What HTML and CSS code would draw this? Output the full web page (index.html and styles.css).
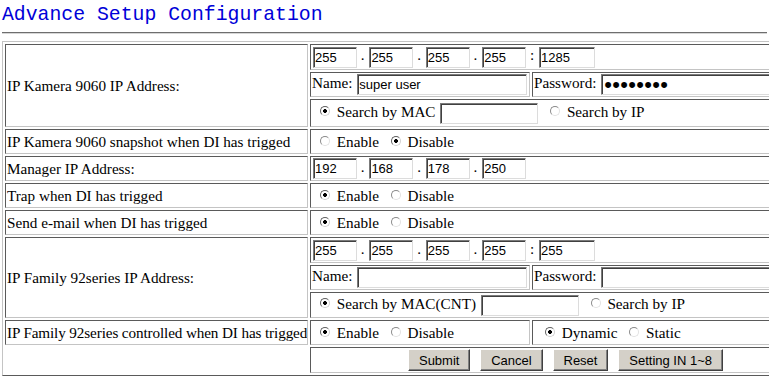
FILE: index.html
```html
<!DOCTYPE html>
<html>
<head>
    <title>Advance Setup Configuration</title>
    <link rel="stylesheet" href="styles.css">
</head>
<body>
    <div class="title">Advance Setup Configuration</div>
    <hr class="rule">

    <form id="setupForm">
    <table class="setup">
        <colgroup>
            <col class="c-label">
            <col class="c-mid">
            <col class="c-right">
        </colgroup>

        <tr class="r-ip">
            <td rowspan="3">IP Kamera 9060 IP Address:</td>
            <td colspan="2"><input type="text" class="oct" value="255"> . <input type="text" class="oct" value="255"> . <input type="text" class="oct" value="255"> . <input type="text" class="oct" value="255"> : <input type="text" class="port" value="1285"></td>
        </tr>
        <tr>
            <td>Name: <input type="text" class="name" value="super user"></td>
            <td>Password: <input type="password" class="name pass" value="12345678"></td>
        </tr>
        <tr class="r-search">
            <td colspan="2"><input type="radio" name="camSearch" checked> Search by MAC <input type="text" class="mac"> <input type="radio" name="camSearch"> Search by IP</td>
        </tr>

        <tr>
            <td>IP Kamera 9060 snapshot when DI has trigged</td>
            <td colspan="2"><input type="radio" name="snap"> Enable <input type="radio" name="snap" checked> Disable</td>
        </tr>
        <tr>
            <td>Manager IP Address:</td>
            <td colspan="2"><input type="text" class="oct" value="192"> . <input type="text" class="oct" value="168"> . <input type="text" class="oct" value="178"> . <input type="text" class="oct" value="250"></td>
        </tr>
        <tr>
            <td>Trap when DI has trigged</td>
            <td colspan="2"><input type="radio" name="trap" checked> Enable <input type="radio" name="trap"> Disable</td>
        </tr>
        <tr>
            <td>Send e-mail when DI has trigged</td>
            <td colspan="2"><input type="radio" name="mail" checked> Enable <input type="radio" name="mail"> Disable</td>
        </tr>

        <tr class="r-ip">
            <td rowspan="3">IP Family 92series IP Address:</td>
            <td colspan="2"><input type="text" class="oct" value="255"> . <input type="text" class="oct" value="255"> . <input type="text" class="oct" value="255"> . <input type="text" class="oct" value="255"> : <input type="text" class="port" value="255"></td>
        </tr>
        <tr>
            <td>Name: <input type="text" class="name"></td>
            <td>Password: <input type="password" class="name pass"></td>
        </tr>
        <tr class="r-ip">
            <td colspan="2"><input type="radio" name="famSearch" checked> Search by MAC(CNT) <input type="text" class="mac"> <input type="radio" name="famSearch"> Search by IP</td>
        </tr>

        <tr>
            <td class="tight">IP Family 92series controlled when DI has trigged</td>
            <td><input type="radio" name="famCtrl" checked> Enable <input type="radio" name="famCtrl"> Disable</td>
            <td class="opt"><input type="radio" name="famMode" checked> Dynamic <input type="radio" name="famMode"> Static</td>
        </tr>

        <tr class="r-btn">
            <td></td>
            <td colspan="2" class="actions">
                <button type="submit" class="btn">Submit</button>
                <button type="button" class="btn">Cancel</button>
                <button type="reset" class="btn">Reset</button>
                <button type="button" class="btn">Setting IN 1~8</button>
            </td>
        </tr>
    </table>
    </form>
</body>
</html>
```

FILE: styles.css
```css
html { overflow: hidden; }
body { margin: 0; padding: 0 2px; font-family: "Liberation Serif", "Times New Roman", serif; font-size: 15.2px; color: #000; background: #fff; }

.title { font-family: "Liberation Mono", "Courier New", monospace; font-size: 19.8px; color: #0000d8; padding-top: 4px; white-space: nowrap; }
.rule { height: 0; margin: 6px 0 7px; border: 0; border-top: 1px solid #6e6e6e; border-bottom: 1px solid #d6d6d6; }

.setup { width: 822px; table-layout: fixed; border-spacing: 2px; border: 1px solid; border-color: #c4c4c4 #5a5a5a #5a5a5a #c4c4c4; empty-cells: hide; }
.setup td { box-sizing: border-box; height: 25px; padding: 1px; border: 1px solid; border-color: #5a5a5a #c4c4c4 #c4c4c4 #5a5a5a; line-height: 18px; white-space: nowrap; overflow: hidden; }
.setup .r-ip td { height: 26px; }
.setup .r-search td { height: 28px; }
.setup .r-btn td { height: 26px; }
.setup .tight { letter-spacing: -0.12px; }
.c-label { width: 303px; }
.c-mid { width: 220px; }

input[type=text], input[type=password] { box-sizing: border-box; height: 21px; margin: 0 0 0 1px; padding: 0 1px; font: 13px "Liberation Sans", Arial, sans-serif; color: #000; border: 1px solid; border-color: #7b7b7b #dcdcdc #dcdcdc #7b7b7b; box-shadow: inset 1px 1px 0 #404040; vertical-align: middle; }
.oct { width: 44px; }
.port { width: 56px; }
.name { width: 170px; }
.mac { width: 98px; height: 20px; }
input.pass { font-size: 22px; letter-spacing: 0.3px; padding-left: 2px; }

input[type=radio] { -webkit-appearance: none; appearance: none; box-sizing: border-box; width: 10px; height: 10px; margin: 0 3px 1px 8px; border: 1px solid; border-color: #8a8a8a #e2e2e2 #e2e2e2 #8a8a8a; border-radius: 50%; background: #fff; vertical-align: baseline; }
input[type=radio]:checked { border-color: #606060 #d0d0d0 #d0d0d0 #606060; background: radial-gradient(circle, #000 0 1.6px, #fff 2.2px); }
.opt { padding-left: 4px !important; }

.actions { text-align: center; }
.btn { height: 22px; margin: 0 3px; padding: 0 10px; font: 13px "Liberation Sans", Arial, sans-serif; color: #000; background: #d4d0c8; border: 1px solid; border-color: #fff #404040 #404040 #fff; box-shadow: inset -1px -1px 0 #808080; vertical-align: middle; }
```
